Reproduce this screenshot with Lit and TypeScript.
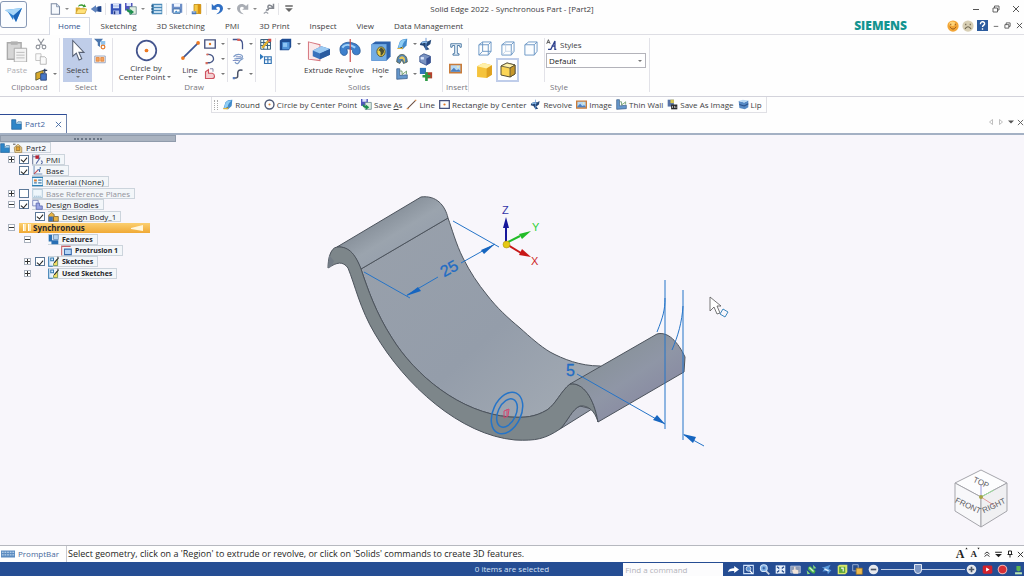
import { LitElement, html, css, svg, nothing } from "lit";
import { customElement, property } from "lit/decorators.js";
import { classMap } from "lit/directives/class-map.js";

/* Icon artwork, drawn on a 16 x 16 grid unless another size is given. */
const icons: Record<string, unknown> = {
  blank: svg`<path d="M3 1h7l4 4v10H3z" fill="#f6f9fd" stroke="#7d8ba3" stroke-width="1.4"/><path d="M10 1v4h4" fill="#cfdced" stroke="#7d8ba3"/>`,
  open: svg`<path d="M1 6h5l1 1h7v7H1z" fill="#d9a628"/><path d="M1 14l3-6h12l-3 6z" fill="#ffe27a" stroke="#c2921e" stroke-width=".7"/><path d="M4 5c1-4 6-4 8-2V1l3 4-5 1 1-1.500c-2-1-4-1-7 .5z" fill="#3d9b35"/>`,
  back: svg`<path d="M1 8l7-5v3c4-2 6-1 7-1v7c-3-1-5-1-7-.5V13z" fill="#5f83bd"/><path d="M10 5l5-1v8l-5-1z" fill="#1f4388"/>`,
  save: svg`<path d="M1 1h14v14H1z" fill="#3553b8"/><path d="M4 1h8v6H4z" fill="#e8f0ff"/><path d="M4 3h8M4 5h8" stroke="#9eb2e0"/><path d="M4 10h8v5H4z" fill="#aebfec"/><path d="M5 11h2v4H5z" fill="#20377e"/>`,
  saveAs: svg`<path d="M0 0h10v10H0z" fill="#4f55bd"/><path d="M2 0h6v4H2z" fill="#dfe6ff"/><path d="M6 5h9v10H6z" fill="#dfeee0" stroke="#5c7d86"/><path d="M2 8c0 4 3 5 5 5v3l5-4-5-4v2c-2 0-3-1-3-2z" fill="#1d8f4e"/>`,
  list: svg`<path d="M1 1h14v14H1z" fill="#4b8ab8"/><path d="M4 3h10v2H4zM4 7h10v2H4zM4 11h10v2H4z" fill="#e9f6ff"/><path d="M1.500 3v10" stroke="#1f4c77" stroke-width="2" stroke-dasharray="2 2"/>`,
  saveImg: svg`<path d="M1 1h14v12H1z" fill="#6d8fc7"/><path d="M4 1h8v4H4z" fill="#f0f5ff"/><path d="M3 8h9v6H3z" fill="#fff" stroke="#35659d"/><path d="M4 13l3-3 2 2 2-1 1 2z" fill="#3d88c9"/>`,
  door: svg`<path d="M4 2h9v12H4z" fill="#f6c945" stroke="#b8860b"/><path d="M9 1l4 1v13l-4-2z" fill="#d89311"/><path d="M1 11h6v4H1z" fill="#4776b8"/><path d="M2 12h4" stroke="#fff"/>`,
  undo: svg`<path d="M1 1v8h8L6.500 6.500C9 4 12 5 12 8c0 3-2 5-5 7 6-1 9-4 9-8 0-5-7-8-12-3z" fill="#2f6fc4"/>`,
  redo: svg`<path d="M15 1v8H7l2.500-2.500C7 4 4 5 4 8c0 3 2 5 5 7-6-1-9-4-9-8 0-5 7-8 12-3z" fill="#a9adb4"/>`,
  repeat: svg`<path d="M14 1v6H8M13 6C10 1 5 3 7 7c1 2-1 3-3 2" fill="none" stroke="#83878f" stroke-width="2"/><path d="M1 14l3-2 3 2" fill="none" stroke="#9a9ea6" stroke-width="1.500"/>`,
  more: svg`<path d="M3 3h10v2H3z" fill="#666"/><path d="M3 7h10l-5 5z" fill="#666"/>`,
  paste: svg`<path d="M1 2h10v12H1z" fill="#d6d6d6" stroke="#aaa"/><path d="M3.500 1h5v2.500h-5z" fill="#b2b2b2"/><path d="M6 6h9v10H6z" fill="#f3f3f3" stroke="#a9a9a9" stroke-width=".7"/><path d="M7.500 9h6M7.500 11h6M7.500 13h6" stroke="#bdbdbd" stroke-width=".7"/>`,
  cut: svg`<path d="M4 1l6 9M12 1L6 10" stroke="#8d9199" stroke-width="1.600"/><circle cx="4" cy="12" r="2.500" fill="none" stroke="#8d9199" stroke-width="1.400"/><circle cx="12" cy="12" r="2.500" fill="none" stroke="#8d9199" stroke-width="1.400"/>`,
  copy: svg`<path d="M1 1h7v9H1z" fill="#fafafa" stroke="#b5b5b5"/><path d="M7 5h6l2 2v8H7z" fill="#fafafa" stroke="#a5a5a5"/>`,
  format: svg`<path d="M1 6l9-3v8l-9 4z" fill="#d8a92b" stroke="#4b4b2a"/><path d="M7 7h7v8H7z" fill="#4676c8" stroke="#223d73"/><path d="M10 3h5M12 1v5" stroke="#2e3e5e" stroke-width="1.500"/>`,
  pointer: svg`<path d="M4.500 1v10.500l2.400-2.100L8.700 14l1.800-.8-1.900-4.300H12z" fill="#fff" stroke="#566074" stroke-width=".7"/>`,
  filter: svg`<path d="M0 1h12L8 6v6L5 10V6z" fill="#4b76ad"/><path d="M9 4h6v5H9z" fill="#8fc3ec"/><circle cx="12" cy="12" r="2.500" fill="none" stroke="#e27a2d" stroke-width="1.600"/>`,
  selBox: svg`<path d="M1 4h14v9H1z" fill="#fff0df" stroke="#7f93b9"/><path d="M3 6h4v5H3zM9 6h4v5H9z" fill="#f3a45d" stroke="#d76b21" stroke-width=".8"/>`,
  circle: svg`<circle cx="8" cy="8" r="6.800" fill="none" stroke="#44558e" stroke-width="1.200"/><circle cx="8" cy="8" r="1.300" fill="#ed7820"/>`,
  circleSm: svg`<circle cx="8" cy="8" r="6.500" fill="none" stroke="#4a5674" stroke-width="2"/><circle cx="8" cy="8" r="1.500" fill="#d6833b"/>`,
  line: svg`<path d="M2.500 13.500l11-11" stroke="#3d5796" stroke-width="1.300"/><circle cx="2.200" cy="13.800" r="1.400" fill="#ed7820"/><circle cx="13.800" cy="2.200" r="1.400" fill="#ed7820"/>`,
  lineSm: svg`<path d="M2 14L14 2" stroke="#6b4f42" stroke-width="1.600"/><path d="M1 13h3v2H1zM13 1h2v2h-2z" fill="#dd8e4a"/>`,
  rect: svg`<path d="M1 2.500h14v11H1z" fill="#fbfcff" stroke="#46527e" stroke-width="1.800"/><circle cx="8" cy="8" r="1.600" fill="#e2761f"/>`,
  arc: svg`<path d="M4 2c9-1 12 8 4 11H3" fill="none" stroke="#455585" stroke-width="1.700"/><path d="M2 12h3v3H2zM3 1h3v2H3z" fill="#dc6d5b"/>`,
  region: svg`<path d="M2 14V5l4-3v5h5c4 1 4 7 0 7z" fill="#f4cfd2" stroke="#cf5360" stroke-width="1.500"/><path d="M8 1h4v4" fill="none" stroke="#5b638c"/>`,
  fillet: svg`<path d="M1 2h7c4 0 6 3 6 6v7" fill="none" stroke="#44558e" stroke-width="1.700"/><path d="M7 1h4v3H7z" fill="#d9625a"/>`,
  offset: svg`<path d="M2 5c5-5 12-3 12 0s-8 2-11 3M4 12c2 4 5 2 6-1s4-2 5-4" fill="none" stroke="#7c9ac7" stroke-width="1.600"/><path d="M1 10h8M5 5h7" fill="none" stroke="#566bb0"/>`,
  curve: svg`<path d="M2 13c12 3-1-12 12-10" fill="none" stroke="#4a5268" stroke-width="2"/><path d="M1 12h3v3H1z" fill="#5b7fbf"/>`,
  grid: svg`<path d="M1 2h13v13H1zM1 6h13M1 10h13M5 2v13M10 2v13" fill="#eef8f5" stroke="#3a5f7c" stroke-width="1.300"/><path d="M3 13l8-9" stroke="#e5b02a" stroke-width="3"/><path d="M11 1h4v4h-4z" fill="#d14843"/>`,
  table: svg`<path d="M0 1l5 4-5 4z" fill="#2f79bd"/><path d="M6 5h9v9H6zM6 9h9M10.500 5v9" fill="#eff7ff" stroke="#3474b3" stroke-width="1.500"/>`,
  block: svg`<path d="M1 3l3-2h11v10l-3 4H1z" fill="#1e4c92"/><path d="M4 5h9v9H4z" fill="#5497db"/><path d="M5 6h5v5H5z" fill="#8cc4f5"/>`,
  extrude: svg`<path d="M1 2l8 2v11l-8-1z" fill="#fbe9ea" stroke="#d6757e" stroke-width=".7"/><path d="M4 8l6-3 6 2v4l-7 3-5-2z" fill="#3973bd"/><path d="M4 8l6-3 6 2-7 3z" fill="#9ccaf2"/><path d="M9 10v4l7-3V7z" fill="#295b9f"/>`,
  revolve: svg`<path d="M2 10C-1 3 7 1 11 3c5 1 6 8 2 8-2 0-3-1-3-3 0-1-2-1-4-1 2 4-2 6-4 3z" fill="#3e80cc" stroke="#22528f" stroke-width=".5"/><path d="M3 6c2-3 6-2 9 0" fill="none" stroke="#9fd0f8" stroke-width="1.400"/><path d="M8.500 0v16" stroke="#c94646" stroke-width=".8"/>`,
  hole: svg`<path d="M1 3l3-2h11v11l-3 3H1z" fill="#2d62ac"/><path d="M1 3h11v12H1z" fill="#73ace4"/><ellipse cx="8" cy="8.500" rx="3" ry="3.500" fill="#f0d34d" stroke="#4d4619" stroke-width=".6"/><path d="M8 5.500c3 1 3 4 0 6-1-1 1-3-2-4z" fill="#4c5034"/>`,
  round: svg`<path d="M2 14L5 5c2-3 5-4 10-4l-1 9-5 5z" fill="#418acb"/><path d="M5 6c2-4 5-4 9-4-4 3-6 7-6 12l-5-1z" fill="#8ecdf5"/><path d="M2 14h6l1-2" stroke="#e1b43a" stroke-width="1.500"/>`,
  revCut: svg`<path d="M1 9c1-5 7-5 9-4l4-2-1 5-4 3 3 3-4 1-3-5z" fill="#244879"/><path d="M8 1v14" stroke="#6091d2"/><path d="M3 7c3-2 5-1 6 0" stroke="#87b9ea" stroke-width="2"/>`,
  dome: svg`<path d="M1 12C1 4 5 2 8 2s7 2 7 10l-5 2-2-5-3 5z" fill="#5486b8" stroke="#4b5438"/><path d="M4 8c1-5 7-5 8 0v5l-3-5z" fill="#e2c55a"/>`,
  pattern: svg`<path d="M1 4l5-3 8 3v8l-5 3-8-4z" fill="#7a93c2" stroke="#334d87"/><path d="M9 7v8l5-3V4z" fill="#354f92"/><path d="M2 5h4v3H2z" fill="#dce7fb"/>`,
  thin: svg`<path d="M1 1h4v9l10-1v5L1 15z" fill="#6598cd" stroke="#385a87"/><path d="M5 4h3v5l6-5v4" fill="#dfeec8" stroke="#5b8c63"/>`,
  addBody: svg`<path d="M1 1h7v7H1z" fill="#3276bd"/><path d="M8 6h7v7H8z" fill="#b5412d"/><path d="M4 9h3V6h3v3h3v3h-3v4H7v-4H4z" fill="#2d9b45"/>`,
  letterT: svg`<path d="M2 2h12v4h-1.500L12 4H9.500v9l2 .5V15h-7v-1.500l2-.5V4H4l-.5 2H2z" fill="#e9f3fc" stroke="#3e6e9d" stroke-width="1"/>`,
  image: svg`<path d="M1 3h14v10H1z" fill="#b7d9f4" stroke="#c97c3a" stroke-width="2"/><path d="M2 11l4-4 3 3 3-1 2 2v1H2z" fill="#4d80c0"/><circle cx="11" cy="6" r="1" fill="#fff4a0"/>`,
  wire: svg`<path d="M2 4l4-3h9v10l-3 4H2zM2 4h10v11M12 4l3-3M6 1v10L2 15M6 11h9" fill="none" stroke="#6b96c4" stroke-width="1"/>`,
  hidden: svg`<path d="M2 4l4-3h9v10l-3 4H2zM2 4h10v11M12 4l3-3" fill="none" stroke="#6b96c4" stroke-width="1"/><path d="M6 1v10L2 15M6 11h9" fill="none" stroke="#b7cbe3" stroke-width=".8"/>`,
  cube: svg`<path d="M2 4l4-3h9v10l-3 4H2zM2 4h10v11M12 4l3-3" fill="#fbfdff" stroke="#6b96c4" stroke-width="1"/>`,
  shaded: svg`<path d="M1 4l6-3 8 2v9l-5 3-9-1z" fill="#f5c33c"/><path d="M1 4l6-3 8 2-5 3z" fill="#fff0a8"/><path d="M10 6v9l5-3V3z" fill="#dfa120"/>`,
  shadedEdge: svg`<path d="M1 4l6-3 8 2v9l-5 3-9-2z" fill="#fbd557" stroke="#544e37" stroke-width="1"/><path d="M1 4l9 2 5-3-8-2z" fill="#fff2ad" stroke="#544e37" stroke-width=".8"/><path d="M10 6v9l5-3V3z" fill="#c7982c" stroke="#544e37" stroke-width=".8"/>`,
  styleAA: svg`<path d="M1 7l2.500-6 2.500 6M2 5h3" fill="none" stroke="#333" stroke-width="1.100"/><path d="M5 15h2l6-12v12h2M8 10.500h5M3 15h4" fill="none" stroke="#2c3f8c" stroke-width="1.900"/>`,
  saveAsImg: svg`<path d="M1 1h9v10H1z" fill="#5672a5"/><path d="M5 1h5v5H5z" fill="#d7c850"/><path d="M6 8h9v7H6z" fill="#2a2c2e"/><path d="M8 10v3M11 10v3M13 11v2" stroke="#f4f4f4"/>`,
  lip: svg`<path d="M1 3l8 2 6-3v10l-5 3-8-2z" fill="#5689c4"/><path d="M1 3l6-2 8 1-6 3z" fill="#b8d8f4"/><path d="M2 8l7 2 6-3" fill="none" stroke="#2b528d" stroke-width="1.500"/>`,
  min: svg`<path d="M2 9h12" stroke="currentColor" stroke-width="2"/>`,
  restore: svg`<path d="M2 6h9v8H2zM5 6V2h9v8h-3" fill="none" stroke="currentColor" stroke-width="1.800"/>`,
  close: svg`<path d="M2 2l12 12M14 2L2 14" stroke="currentColor" stroke-width="2"/>`,
  smile: svg`<circle cx="8" cy="8" r="7.500" fill="#f2a536"/><ellipse cx="7" cy="5" rx="4" ry="3" fill="#ffd376"/><path d="M5 5v2M11 5v2M4 9c2 4 6 4 8 0" fill="none" stroke="#8b4e13" stroke-width="1.200"/>`,
  sad: svg`<circle cx="8" cy="8" r="7.500" fill="#d8cfb4"/><path d="M5 5v2M11 5v2M4 12c2-4 6-4 8 0" fill="none" stroke="#6c634d" stroke-width="1.500"/>`,
  help: svg`<path d="M0 0h16v16H0z" fill="#2b5b9e"/><path d="M5 6c0-5 7-4 6 0-1 2-3 2-3 4M8 12v2" fill="none" stroke="#fff" stroke-width="2"/>`,
  part: svg`<path d="M1 1h6v6h8v8H1z" fill="#2e86c8" stroke="#185c99"/><path d="M7 7l3-3h5v3" fill="#a5d3f0" stroke="#4e7a9f"/>`,
  home: svg`<path d="M2 7l6-5 6 5v8H3z" fill="#f6dc9a" stroke="#8f6a2a"/><path d="M5 6h6v6H5z" fill="#e3a434" stroke="#7a5b26"/><path d="M0 2h4" stroke="#777" stroke-width="2"/>`,
  pmi: svg`<path d="M1 1v14M1 4h6M10 1v7" stroke="#6a7698" stroke-width="1.500"/><path d="M5 2h5v5H5z" fill="#b92332"/><path d="M12 5l-6 9M13 10a2 2 0 110 4" fill="none" stroke="#5a6ba5" stroke-width="1.500"/>`,
  base: svg`<path d="M3 1v12h12" fill="none" stroke="#7793bb" stroke-width="1.500"/><path d="M3 13l6-6" stroke="#c54a53" stroke-width="1.500"/><path d="M8 7h3v3M12 3v3" stroke="#3c68a8" stroke-width="1.500" fill="none"/>`,
  material: svg`<path d="M0 2h16v12H0z" fill="#eaf7ff" stroke="#2f80b5" stroke-width="1.500"/><path d="M3 5h4v3H3z" fill="#d97d36"/><path d="M3 10h4M9 6h5M9 10h5" stroke="#467ba4" stroke-width="1.500"/>`,
  planes: svg`<path d="M1 2h14v12H1z" fill="#eef6fb" stroke="#9bb9ce"/><path d="M3 12h10" stroke="#6d9bbd" stroke-dasharray="2 1"/>`,
  bodies: svg`<path d="M1 2h8v8H1z" fill="#eff3ff" stroke="#5a68aa"/><path d="M6 6h5v4h4v5H6z" fill="#9aa5e4" stroke="#4b58a5"/>`,
  body: svg`<path d="M1 15V6l4-4 4 3v3h6v7z" fill="#e7b344" stroke="#6e5426"/><path d="M1 8h6v7H1z" fill="#3f71b5"/><path d="M8 8v7" stroke="#55452a"/>`,
  features: svg`<path d="M1 1h5v8h9v6H5V11H1z" fill="#286fb4"/><path d="M8 1h7v7H8z" fill="#b5d3ef" stroke="#557ea9"/>`,
  protrusion: svg`<path d="M1 15V2h13" fill="none" stroke="#c86066" stroke-width="1.500"/><path d="M5 6h10v8H5z" fill="#b3d4f5" stroke="#3668aa" stroke-width="1.500"/>`,
  sketches: svg`<path d="M1 1v14h6M4 3h4v4H4z" fill="#dcefff" stroke="#3378ae" stroke-width="1.500"/><path d="M8 11l6-7v10H8z" fill="#f5dc62" stroke="#437a50"/><path d="M14 1l1 2-6 7" fill="none" stroke="#333" stroke-width="1.500"/>`,
  prompt: svg`<path d="M0 4h16v8H0z" fill="#5b8bc0"/><path d="M1 6h14M1 9h14" stroke="#dcebfa" stroke-dasharray="2 1"/>`,
  caretUp: svg`<path d="M2 12l6-9 6 9z" fill="currentColor"/>`,
  caretDown: svg`<path d="M2 4l6 9 6-9z" fill="currentColor"/>`,
  up2: svg`<path d="M3 8l5-4 5 4M3 13l5-4 5 4" fill="none" stroke="currentColor" stroke-width="1.800"/>`,
  downBar: svg`<path d="M2 3h12v2H2zM2 7h12l-6 6z" fill="currentColor"/>`,
  pin: svg`<path d="M5 2h6v7H5zM3 9h10M8 9v6" fill="none" stroke="currentColor" stroke-width="2"/>`,
  triL: svg`<path d="M11 3v10L5 8z" fill="none" stroke="#aaa" stroke-width="1.500"/>`,
  triR: svg`<path d="M5 3v10l6-5z" fill="none" stroke="#aaa" stroke-width="1.500"/>`,
  triD: svg`<path d="M2 5h12l-6 6z" fill="#555"/>`,
  goArrow: svg`<path d="M0 12c1-5 4-6 9-6V3l7 5-7 5v-3c-4 0-7 0-9 2z" fill="#fff"/>`,
  zoomArea: svg`<path d="M1 2h14v12H1z" fill="none" stroke="#cfe2fa" stroke-width="1.500"/><circle cx="8" cy="7" r="3.500" fill="#5e93d1" stroke="#fff"/><path d="M10 10l4 4" stroke="#fff" stroke-width="2"/>`,
  zoom: svg`<circle cx="7" cy="6" r="5" fill="#7fb0e5" stroke="#d5e7fa" stroke-width="1.500"/><path d="M10 10l5 5" stroke="#c9d2df" stroke-width="2.500"/><path d="M5 6h4M7 4v4" stroke="#1d4286"/>`,
  fit: svg`<path d="M1 2h14v12H1z" fill="#e9f2fd"/><path d="M3 4l10 8M13 4L3 12" stroke="#23498a" stroke-width="2"/><path d="M6 6h4v4H6z" fill="#e9f2fd"/>`,
  pan: svg`<path d="M1 3h14v10H1z" fill="#8f9cb5" stroke="#c3d1e7"/><path d="M5 14L3 9l3-1V4h2v4l4 1v5z" fill="#f2e4d8"/>`,
  rotate: svg`<path d="M3 5l3-2 8 7-2 4-3-1-6-5z" fill="#47b24b"/><path d="M10 1l5 5-4 1zM1 9l5 5-4 1z" fill="#8cdf7e"/><path d="M5 5l6 6" stroke="#d4f4cf" stroke-width="2"/>`,
  orient: svg`<path d="M6 4l8-3-3 6 4 2-5 6-1-5-7 1 3-4-4-2z" fill="#5c9bdb"/><path d="M5 7l6 3" stroke="#e3f0fd" stroke-width="2"/>`,
  views: svg`<path d="M1 3l3-2h11v11l-3 3H1z" fill="#d9e86a"/><path d="M3 4h9v9H3z" fill="#5fa73c"/><path d="M6 6h3v5" stroke="#fff" fill="none" stroke-width="1.500"/>`,
  layers: svg`<path d="M1 1h8v9H1z" fill="#274d8d" stroke="#c5d4ec"/><path d="M6 6h9v9H6z" fill="#eeba4b" stroke="#8c6a29"/>`,
  minusC: svg`<circle cx="8" cy="8" r="7" fill="#e7e9ed"/><path d="M4 8h8" stroke="#4c5665" stroke-width="2.400"/>`,
  plusC: svg`<circle cx="8" cy="8" r="7" fill="#e7e9ed"/><path d="M4 8h8M8 4v8" stroke="#4c5665" stroke-width="2.400"/>`,
  video: svg`<rect x="1" y="2" width="14" height="12" rx="2" fill="#d3222c"/><path d="M6 5v6l5-3z" fill="#fff"/>`,
  record: svg`<circle cx="8" cy="8" r="7" fill="#f0b1b0"/><circle cx="8" cy="8" r="5.500" fill="#d62f36"/>`,
  user: svg`<path d="M3 12h10v3H3z" fill="#b9e6b0"/><path d="M5 3h6v6l-3 2-3-2z" fill="#5cb54f"/>`,
};

const icon = (name: string, size = 12) =>
  html`<svg width=${size} height=${size} viewBox="0 0 16 16" aria-hidden="true">${icons[name]}</svg>`;

const base = css`
  :host { font: 8px/10px "Open Sans", "Noto Sans", sans-serif; color: #3d3d42; }
  * { box-sizing: border-box; }
  button { font: inherit; color: inherit; background: none; border: 0; padding: 0; margin: 0; display: inline-flex; align-items: center; justify-content: center; }
  svg { display: block; flex: none; }
`;

@customElement("title-header")
class TitleHeader extends LitElement {
  static styles = [base, css`
    :host { display: grid; grid-template-columns: 28px minmax(0, 1fr); border-bottom: 1px solid #dedee4; background: #fefefe; }
    .app { width: 27px; height: 27px; margin-top: 1px; border: 1px solid #8798b5; border-radius: 3px; background: #fbfdff; }
    .rows { display: grid; grid-template-rows: 17px 17px; }
    .top { display: grid; grid-template-columns: minmax(0, 1fr) auto minmax(0, 1fr); align-items: center; margin-left: -28px; }
    .quick { display: flex; align-items: center; height: 15px; padding-left: 47px; }
    .quick button { width: 15px; }
    .arrow { width: 0; height: 0; border: 2px solid transparent; border-top-color: #888; border-bottom: 0; margin: 0 4px 0 3px; }
    .bar { width: 1px; height: 12px; background: #e4e4e8; margin: 0 2px; }
    .win { display: flex; justify-content: flex-end; gap: 12px; padding-right: 4px; color: #555; }
    .second { display: flex; align-items: stretch; }
    nav { display: flex; gap: 2px; padding-left: 21px; flex: 1; }
    .tab { padding: 3px 8px; border: 1px solid transparent; border-bottom: 0; line-height: 10px; white-space: nowrap; color: inherit; text-decoration: none; }
    .tab.on { color: #2d4f8d; border-color: #d4d9e4; background: #fff; margin-bottom: -1px; }
    .brand { font-weight: 800; font-size: 12px; line-height: 17px; color: #149490; margin-right: 40px; }
    .side { display: flex; align-items: center; gap: 3px; color: #444; }
    .side .sm { width: 9px; }
  `];
  render() {
    const q = (n: string, l: string) => html`<button aria-label=${l}>${icon(n)}</button>`;
    const arrow = html`<span class="arrow"></span>`;
    const bar = html`<span class="bar"></span>`;
    const tabs = ["Home", "Sketching", "3D Sketching", "PMI", "3D Print", "Inspect", "View", "Data Management"];
    return html`
      <button class="app" aria-label="Application menu">
        <svg width="19" height="19" viewBox="0 0 19 19"><path d="M1 5l17-2-6 14-3-6z" fill="#4aa0e6"/><path d="M1 5l8 6 9-8z" fill="#a9d6f7"/><path d="M9 11l3 6 6-14z" fill="#1d65b8"/><path d="M4 7l5 8 1-4z" fill="#2b7ccd"/></svg>
      </button>
      <div class="rows">
        <div class="top">
          <div class="quick">
            ${q("blank", "New")}${arrow}${q("open", "Open")}${q("back", "Back")}${bar}${q("save", "Save")}
            ${q("saveAs", "Save as")}${arrow}${q("list", "Properties")}${bar}${q("saveImg", "Save image")}${bar}
            ${q("door", "Close part")}${bar}${q("undo", "Undo")}${arrow}${q("redo", "Redo")}${arrow}
            ${q("repeat", "Repeat")}${bar}${q("more", "Customize")}
          </div>
          <div>Solid Edge 2022 - Synchronous Part - [Part2]</div>
          <div class="win">
            <button aria-label="Minimize">${icon("min", 8)}</button>
            <button aria-label="Restore">${icon("restore", 8)}</button>
            <button aria-label="Close">${icon("close", 8)}</button>
          </div>
        </div>
        <div class="second">
          <nav>${tabs.map((t, i) => html`<a href="#" class=${classMap({ tab: true, on: i === 0 })}>${t}</a>`)}</nav>
          <span class="brand">SIEMENS</span>
          <div class="side">
            <button aria-label="Like">${icon("smile")}</button>
            <button aria-label="Dislike">${icon("sad")}</button>
            <button aria-label="Help">${icon("help", 11)}</button>
            <button class="sm" aria-label="Minimize document">${icon("min", 6)}</button>
            <button class="sm" aria-label="Restore document">${icon("restore", 7)}</button>
            <button class="sm" aria-label="Close document">${icon("close", 7)}</button>
          </div>
        </div>
      </div>`;
  }
}

@customElement("ribbon-bar")
class RibbonBar extends LitElement {
  static styles = [base, css`
    :host { display: flex; padding: 3px 0 4px; border-bottom: 1px solid #d3d3db; background: #fefefe; }
    .group { display: flex; flex-direction: column; border-right: 1px solid #e2e2e8; padding: 0 3px; }
    .body { display: flex; height: 44px; align-items: stretch; }
    .name { text-align: center; color: #77777d; line-height: 10px; }
    .big { flex: none; flex-direction: column; justify-content: flex-start; line-height: 9px; gap: 2px; white-space: nowrap; }
    .big .pic { height: 25px; display: flex; align-items: center; }
    .big.two { gap: 0; }
    .big.two .tail { display: flex; align-items: center; }
    .big.off { color: #aeaeb4; }
    .big.on { background: #bfcde9; }
    .down { width: 0; height: 0; border: 2px solid transparent; border-top-color: #777; border-bottom: 0; margin: 0 2px; }
    .col { display: flex; flex: none; flex-direction: column; justify-content: flex-start; gap: 3px; }
    .col button { justify-content: flex-start; height: 12px; gap: 3px; }
    .col.line { border-left: 1px solid #e2e2e8; padding-left: 4px; }
    .w28 { width: 28px; } .w29 { width: 29px; } .w31 { width: 31px; } .w60 { width: 60px; }
    .clip { width: 60px; } .sel { width: 53px; } .draw { width: 163px; } .sol { width: 167px; } .ins { width: 26px; } .sty { width: 181px; }
    .clip .body { gap: 4px; } .sel .body { gap: 2px; }
    .insert { display: flex; flex-direction: column; align-items: center; gap: 6px; padding-top: 4px; margin: 0 auto; }
    .looks { display: grid; grid-template-columns: 23px 23px 23px; grid-template-rows: 20px 24px; border-right: 1px solid #e2e2e8; width: 73px; padding-left: 1px; margin-right: 1px; }
    .looks .on { background: #fff; border: 2px solid #bfcdea; }
    .styles { display: flex; flex-direction: column; gap: 3px; padding-top: 1px; }
    label { display: flex; gap: 3px; line-height: 11px; align-items: center; }
    .box { display: grid; width: 100px; }
    select { grid-area: 1 / 1; appearance: none; font: inherit; color: #222; background: #fff; border: 1px solid #b3b3ba; border-radius: 0; height: 15px; padding: 0 2px; }
    .box .down { grid-area: 1 / 1; place-self: center end; margin-right: 4px; pointer-events: none; }
  `];
  render() {
    const down = html`<span class="down"></span>`;
    const small = (n: string, l: string, menu = false, s = 12) =>
      html`<button aria-label=${l}>${icon(n, s)}${menu ? down : nothing}</button>`;
    const big = (n: string, text: unknown, w: string, size = 24, cls = "", menu = true) =>
      html`<button class="big ${w} ${cls}"><span class="pic">${icon(n, size)}</span><span>${text}</span>${menu ? down : nothing}</button>`;
    return html`
      <section class="group clip"><div class="body">
        ${big("paste", "Paste", "w28", 22, "off", false)}
        <div class="col">${small("cut", "Cut")}${small("copy", "Copy")}${small("format", "Format", true, 13)}</div>
      </div><div class="name">Clipboard</div></section>
      <section class="group sel"><div class="body">
        ${big("pointer", "Select", "w29", 24, "on")}
        <div class="col">${small("filter", "Filter")}${small("selBox", "Selection box")}</div>
      </div><div class="name">Select</div></section>
      <section class="group draw"><div class="body">
        <button class="big two w60"><span class="pic">${icon("circle", 23)}</span><span>Circle by</span><span class="tail">Center Point${down}</span></button>
        ${big("line", "Line", "w28", 21)}
        <div class="col">${small("rect", "Rectangle", true)}${small("arc", "Arc", true)}${small("region", "Region", true)}</div>
        <div class="col line">${small("fillet", "Fillet", true)}${small("offset", "Offset")}${small("curve", "Curve", true)}</div>
        <div class="col line">${small("grid", "Grid")}${small("table", "Table")}</div>
      </div><div class="name">Draw</div></section>
      <section class="group sol"><div class="body">
        <div class="col">${small("block", "Block", true, 13)}</div>
        ${big("extrude", "Extrude", "w31", 23, "", false)}
        ${big("revolve", "Revolve", "w31", 23)}
        ${big("hole", "Hole", "w31", 22)}
        <div class="col">${small("round", "Round", true)}${small("dome", "Draft")}${small("thin", "Thin wall", true)}</div>
        <div class="col">${small("revCut", "Cut revolve", false, 14)}${small("pattern", "Pattern", false, 13)}${small("addBody", "Add body", false, 14)}</div>
      </div><div class="name">Solids</div></section>
      <section class="group ins"><div class="body">
        <div class="insert">${small("letterT", "Text", false, 14)}${small("image", "Image", false, 13)}</div>
      </div><div class="name">Insert</div></section>
      <section class="group sty"><div class="body">
        <div class="looks">
          <button aria-label="Wireframe">${icon("wire", 15)}</button><button aria-label="Hidden edges">${icon("hidden", 15)}</button>
          <button aria-label="Visible edges">${icon("cube", 15)}</button><button aria-label="Shaded">${icon("shaded", 17)}</button>
          <button class="on" aria-label="Shaded with edges">${icon("shadedEdge", 16)}</button>
        </div>
        <div class="styles">
          <label for="style">${icon("styleAA", 11)}Styles</label>
          <div class="box"><select id="style"><option>Default</option></select>${down}</div>
        </div>
      </div><div class="name">Style</div></section>`;
  }
}

@customElement("command-bar")
class CommandBar extends LitElement {
  static styles = [base, css`
    :host { display: flex; justify-content: center; background: #fefefe; padding-right: 46px; }
    .bar { display: flex; align-items: center; height: 16px; border: 1px solid #e0e0e5; border-top: 0; padding: 0 4px 0 2px; gap: 4px; white-space: nowrap; }
    .grip { width: 4px; height: 10px; border-left: 1px dotted #aaa; border-right: 1px dotted #aaa; }
    button { gap: 2px; }
  `];
  render() {
    const items = [["round", "Round"], ["circleSm", "Circle by Center Point"], ["saveAs", html`Save <u>A</u>s`], ["lineSm", "Line"],
      ["rect", "Rectangle by Center"], ["revCut", "Revolve"], ["image", "Image"], ["thin", "Thin Wall"], ["saveAsImg", "Save As Image"], ["lip", "Lip"]] as const;
    return html`<div class="bar"><span class="grip"></span>${items.map(([n, t]) => html`<button>${icon(n, 11)}<span>${t}</span></button>`)}</div>`;
  }
}

@customElement("document-tabs")
class DocumentTabs extends LitElement {
  static styles = [base, css`
    :host { display: flex; justify-content: space-between; align-items: stretch; box-sizing: border-box; background: #fefefe; border-bottom: 2px solid #a4b1c4; height: 22px; }
    .tab { display: flex; align-items: center; width: 67px; margin-top: 1px; padding: 0 4px 0 11px; gap: 3px; border-top: 1px solid #2d4b96; border-right: 1px solid #6d82ab; color: #3e659f; }
    .tab button { margin-left: auto; }
    .nav { display: flex; align-items: center; gap: 2px; color: #555; padding-bottom: 2px; }
  `];
  render() {
    return html`<div class="tab">${icon("part", 11)}<span>Part2</span><button aria-label="Close Part2">${icon("close", 7)}</button></div>
      <div class="nav">
        <button aria-label="Previous tab">${icon("triL", 8)}</button><button aria-label="Next tab">${icon("triR", 8)}</button>
        <button aria-label="Tab list">${icon("triD", 8)}</button><button aria-label="Close tab">${icon("close", 7)}</button>
      </div>`;
  }
}

interface Node { icon: string; text: string; level: number; toggle?: "+" | "-"; check?: boolean; bold?: boolean; faint?: boolean; band?: boolean; }

@customElement("path-finder")
class PathFinder extends LitElement {
  @property({ attribute: false }) nodes: Node[] = [
    { icon: "pmi", text: "PMI", level: 0, toggle: "+", check: true },
    { icon: "base", text: "Base", level: 0, check: true },
    { icon: "material", text: "Material (None)", level: 0 },
    { icon: "planes", text: "Base Reference Planes", level: 0, toggle: "+", check: false, faint: true },
    { icon: "bodies", text: "Design Bodies", level: 0, toggle: "-", check: true },
    { icon: "body", text: "Design Body_1", level: 1, check: true },
    { icon: "", text: "Synchronous", level: 0, toggle: "-", bold: true, band: true },
    { icon: "features", text: "Features", level: 1, toggle: "-", bold: true },
    { icon: "protrusion", text: "Protrusion 1", level: 2, bold: true },
    { icon: "sketches", text: "Sketches", level: 1, toggle: "+", check: true, bold: true },
    { icon: "sketches", text: "Used Sketches", level: 1, toggle: "+", bold: true },
  ];
  static styles = [base, css`
    :host { display: block; width: 176px; color: #26262b; }
    .handle { height: 7px; background: #aab3c0; border: 1px solid #909bab; display: grid; place-items: center; }
    .handle i { width: 28px; border-top: 2px dotted #6b7787; }
    .tree { display: grid; grid-auto-rows: 1fr; height: 137px; margin: 0; padding: 0; list-style: none; }
    .row { display: flex; align-items: center; white-space: nowrap; }
    .l0 { padding-left: 8px; } .l1 { padding-left: 24px; } .l2 { padding-left: 37px; }
    .slot { width: 11px; flex: none; display: flex; }
    .tog { width: 7px; height: 7px; border: 1px solid #a9b1bd; background: #fff; }
    .tog svg { width: 5px; height: 5px; }
    .chk { appearance: none; width: 10px; height: 9px; margin: 0 3px 0 0; border: 1px solid #5c7898; background: #fff; display: grid; flex: none; place-items: center; }
    .chk:checked::before { content: ""; width: 3px; height: 5px; border: solid #222; border-width: 0 1px 1px 0; transform: rotate(40deg); }
    .gap { width: 13px; flex: none; }
    .tag { display: flex; align-items: center; gap: 3px; height: 11px; padding-right: 4px; border: 1px solid #ccd4dc; border-left: 0; background: #f3f6f9; line-height: 9px; }
    .bold { font-weight: 700; font-size: 7px; }
    .faint { color: #92929a; }
    .band { flex: none; width: 131px; padding-right: 7px; background: linear-gradient(#fbcf70, #f0a935); border: 0; font-size: 8px; justify-content: space-between; height: 10px; }
    .mark { display: flex; gap: 2px; }
    .mark i { display: block; width: 3px; border-left: 1px solid #fff; height: 7px; background: #ffe7b0; }
    .mark, .word { align-items: center; }
    .word { display: flex; gap: 2px; padding-left: 4px; }
  `];
  private toggle(t?: "+" | "-") {
    return html`<span class="slot">${t ? html`<button class="tog" aria-label=${t === "+" ? "Expand" : "Collapse"}>
      <svg viewBox="0 0 5 5"><path d=${t === "+" ? "M0 2.500h5M2.500 0v5" : "M0 2.500h5"} stroke="#333" stroke-width="1"/></svg></button>` : nothing}</span>`;
  }
  render() {
    return html`<div class="handle"><i></i></div><ul class="tree">
      <li class="row"><span class="tag">${icon("part", 10)}${icon("home", 10)}Part2</span></li>
      ${this.nodes.map((n) => html`<li class="row l${n.level}">
        ${this.toggle(n.toggle)}
        ${n.band
          ? html`<span class="tag bold band"><span class="word"><span class="mark"><i></i><i></i></span>Synchronous</span>
              <svg width="12" height="8" viewBox="0 0 12 8"><path d="M12 1v6L0 5V4z" fill="#fff6dc"/></svg></span>`
          : html`${n.check === undefined ? html`<span class="gap"></span>` : html`<input class="chk" type="checkbox" aria-label=${n.text} .checked=${n.check} />`}
              <span class=${classMap({ tag: true, bold: !!n.bold, faint: !!n.faint })}>${icon(n.icon, 11)}${n.text}</span>`}
      </li>`)}</ul>`;
  }
}

@customElement("model-canvas")
class ModelCanvas extends LitElement {
  static styles = [base, css`
    :host { display: block; min-height: 0; overflow: hidden; }
    .scene { width: 100%; height: 100%; }
    .dim { stroke: #2574c8; stroke-width: 1; fill: none; }
    .head { fill: #1766c0; }
    .label { fill: #1f6cc4; stroke: #1f6cc4; stroke-width: .3; font: 16px "Liberation Sans", sans-serif; }
    .axis { font: 11px "Liberation Sans", sans-serif; }
    .edge { stroke: #4d545d; stroke-width: 1; stroke-linejoin: round; }
    .face { font: 8px "Liberation Sans", sans-serif; fill: #5c5c62; }
  `];
  render() {
    return html`<svg class="scene" viewBox="0 135 1024 410" role="img" aria-label="Part2 model">
      <defs>
        <linearGradient id="in" x1="380" y1="240" x2="540" y2="420" gradientUnits="userSpaceOnUse"><stop offset="0" stop-color="#98a0ab"/><stop offset=".6" stop-color="#949daa"/><stop offset="1" stop-color="#a0a8b2"/></linearGradient>
        <linearGradient id="roll" x1="378" y1="220" x2="400" y2="256" gradientUnits="userSpaceOnUse"><stop offset="0" stop-color="#88919b"/><stop offset=".5" stop-color="#9ba4ae"/><stop offset="1" stop-color="#969fac"/></linearGradient>
        <linearGradient id="roll2" x1="612" y1="360" x2="640" y2="402" gradientUnits="userSpaceOnUse"><stop offset="0" stop-color="#8a939d"/><stop offset=".5" stop-color="#8f96a6"/><stop offset="1" stop-color="#8a8da3"/></linearGradient>
      </defs>
      <path class="edge" fill="url(#in)" d="M361 269L448 218C452 229 456 244 463 258C470 272 478 284 487 295C497 308 508 318 520 328C530 337 540 346 550 352C563 359 580 366 600 366L650 380L570 384C561 391 556 404 547 410C535 417 525 418 510 417C460 413 415 375 392 338C376 313 368 290 361 269z"/>
      <path class="edge" fill="url(#roll)" d="M337 247L421 197C436 195 445 205 448 218L361 269C356 256 348 246 337 247z"/>
      <path fill="#9097a4" class="edge" d="M560 429C568 421 572 409 580 406L592 409z"/>
      <path class="edge" fill="#7d868a" d="M328 268C328 260 330 248 337 247C350 246 356 256 361 269C368 290 376 313 392 338C415 375 460 413 510 417C525 418 535 417 547 410C556 404 561 391 570 384C583 382 594 398 598 422C595 411 588 405 580 406C572 409 568 421 560 429C545 439 536 441 515 440C460 435 405 385 375 334C360 309 355 285 348 268C343 261 337 262 328 268z"/>
      <path fill="#737c86" d="M328 268l1-13 5 6-3 6z"/>
      <path class="edge" fill="url(#roll2)" d="M570 384L657 334C668 331 678 342 685 357L684 372L598 422C594 398 583 382 570 384z"/>

      <g class="dim">
        <path d="M364 272L410 298M453 221L499 247M407 295L438 277M461 263L495 244"/>
        <path d="M665 280V429M683 290V440M577 374L665 424M704 446L684 435M657 332C663 317 665 310 665 298M672 350C678 336 682 322 683 306"/>
        <g stroke-width="1.500"><ellipse cx="507" cy="413" rx="14" ry="22" transform="rotate(25 507 413)"/><ellipse cx="507" cy="413" rx="9" ry="15" transform="rotate(25 507 413)"/></g>
      </g>
      <path class="head" d="M406 296l12-9 3 4zM495 244l-14 6 3 4zM665 424l-8-9-4 5zM683 434l13 3-3 6z"/>
      <path d="M504 411l5-2-1 7-4 2zM507 409v7" fill="none" stroke="#d4456f"/>
      <text class="label" x="-9" y="6" transform="translate(449 268) rotate(-29)">25</text>
      <text class="label" x="566" y="376">5</text>

      <path d="M506 243V226" stroke="#17179b" stroke-width="2"/><path d="M506 217l3 11h-6z" fill="#17179b"/>
      <path d="M508 242l12-6" stroke="#22bc28" stroke-width="2"/><path d="M531 231l-9 8-3-5z" fill="#22bc28"/>
      <path d="M508 245l13 8" stroke="#c81717" stroke-width="2"/><path d="M531 257l-12-2 3-6z" fill="#c81717"/>
      <circle cx="506.500" cy="244.500" r="3.500" fill="#e5c914" stroke="#a08a0a" stroke-width=".5"/>
      <text class="axis" x="502" y="214" fill="#3434a8">Z</text><text class="axis" x="532" y="231" fill="#32d238">Y</text><text class="axis" x="531" y="265" fill="#ce2727">X</text>

      <path d="M710 297v14l4-4 3 7 3-1-3-7h4z" fill="#fff" stroke="#555" stroke-width=".8"/>
      <path d="M723 309l5 3-3 5-5-3z" fill="none" stroke="#3d87bd"/>

      <g stroke="#a5a5ab" stroke-width="1" stroke-linejoin="round">
        <path d="M955 483l26-13 26 13-26 14z" fill="#fdfdfe"/><path d="M955 483v28l26 16v-30z" fill="#f8f8fa"/><path d="M981 497v30l26-16v-28z" fill="#f0f0f2"/>
      </g>
      <path d="M981 497v-12" stroke="#9a9ae0"/><path d="M981 497l13-7" stroke="#9bdf9b"/><path d="M981 497l14 9" stroke="#e49b9b"/><circle cx="981" cy="497" r="2" fill="#a5a545"/>
      <text class="face" text-anchor="middle" transform="translate(980 485) rotate(25)">TOP</text>
      <text class="face" text-anchor="middle" transform="translate(967 508) rotate(25)">FRONT</text>
      <text class="face" text-anchor="middle" transform="translate(995 508) rotate(-25)">RIGHT</text>
    </svg>`;
  }
}

@customElement("prompt-bar")
class PromptBar extends LitElement {
  static styles = [base, css`
    :host { display: flex; align-items: stretch; box-sizing: border-box; height: 17px; background: #fefefe; border-top: 1px solid #b6b8bf; }
    .name { display: flex; align-items: center; gap: 3px; width: 66px; padding-left: 1px; color: #48699c; }
    .text { flex: 1; font-size: 9px; line-height: 16px; color: #1f1f24; border-left: 1px solid #c9c9cf; padding-left: 1px; white-space: nowrap; }
    .tools { display: flex; align-items: center; gap: 3px; color: #222; }
    .letter { font: bold 12px/14px "Liberation Serif", serif; }
    .letter svg { align-self: flex-start; }
    .letter.less { font-size: 9px; }
  `];
  render() {
    return html`<div class="name">${icon("prompt", 14)}PromptBar</div>
      <div class="text">Select geometry, click on a 'Region' to extrude or revolve, or click on 'Solids' commands to create 3D features.</div>
      <div class="tools">
        <button class="letter" aria-label="Larger text">A${icon("caretUp", 3)}</button><button class="letter less" aria-label="Smaller text">A${icon("caretDown", 3)}</button>
        <button aria-label="Collapse">${icon("up2", 8)}</button><button aria-label="Options">${icon("downBar", 9)}</button>
        <button aria-label="Pin">${icon("pin", 8)}</button><button aria-label="Close">${icon("close", 7)}</button>
      </div>`;
  }
}

@customElement("status-bar")
class StatusBar extends LitElement {
  static styles = [base, css`
    :host { display: grid; grid-template-columns: minmax(0, 1fr) auto minmax(0, 1fr); align-items: center; height: 14px; background: #254d93; color: #d7e2f5; }
    .msg { grid-column: 2; }
    .right { display: flex; align-items: center; justify-content: space-between; margin-left: 74px; }
    input { font: inherit; }
    .find { width: 100px; height: 13px; border: 0; padding: 0 2px; background: #fcfcfd; }
    .find::placeholder { color: #b3b3b9; opacity: 1; }
    .zoom { appearance: none; width: 84px; height: 12px; margin: 0 -3px; background: linear-gradient(#c2cfe6, #c2cfe6) center / 100% 1px no-repeat; }
    .zoom::-webkit-slider-thumb { appearance: none; width: 8px; height: 10px; border: 1px solid #e2e9f5; border-radius: 0 0 4px 4px; background: #7c96c4; }
  `];
  render() {
    const b = (n: string, l: string) => html`<button aria-label=${l}>${icon(n, 11)}</button>`;
    return html`<span class="msg">0 items are selected</span>
      <div class="right">
        <input class="find" type="text" placeholder="Find a command" aria-label="Find a command" />
        ${b("goArrow", "Go")}${b("zoomArea", "Zoom area")}${b("zoom", "Zoom")}${b("fit", "Fit")}${b("pan", "Pan")}${b("rotate", "Rotate")}
        ${b("orient", "Orient")}${b("views", "Views")}${b("layers", "Layers")}${b("minusC", "Zoom out")}
        <input class="zoom" type="range" value="44" aria-label="Zoom level" />
        ${b("plusC", "Zoom in")}${b("video", "Video")}${b("record", "Record")}${b("user", "Account")}
      </div>`;
  }
}

@customElement("app-root")
class AppRoot extends LitElement {
  static styles = css`
    :host { display: flex; flex-direction: column; height: 100vh; background: #f8f6fb; overflow: hidden; }
    .work { flex: 1; min-height: 0; display: grid; grid-template: minmax(0, 1fr) / minmax(0, 1fr); }
    .work > * { grid-area: 1 / 1; }
    path-finder { justify-self: start; align-self: start; z-index: 1; }
  `;
  render() {
    return html`<title-header></title-header><ribbon-bar></ribbon-bar><command-bar></command-bar><document-tabs></document-tabs>
      <main class="work"><model-canvas></model-canvas><path-finder></path-finder></main>
      <prompt-bar></prompt-bar><status-bar></status-bar>`;
  }
}
